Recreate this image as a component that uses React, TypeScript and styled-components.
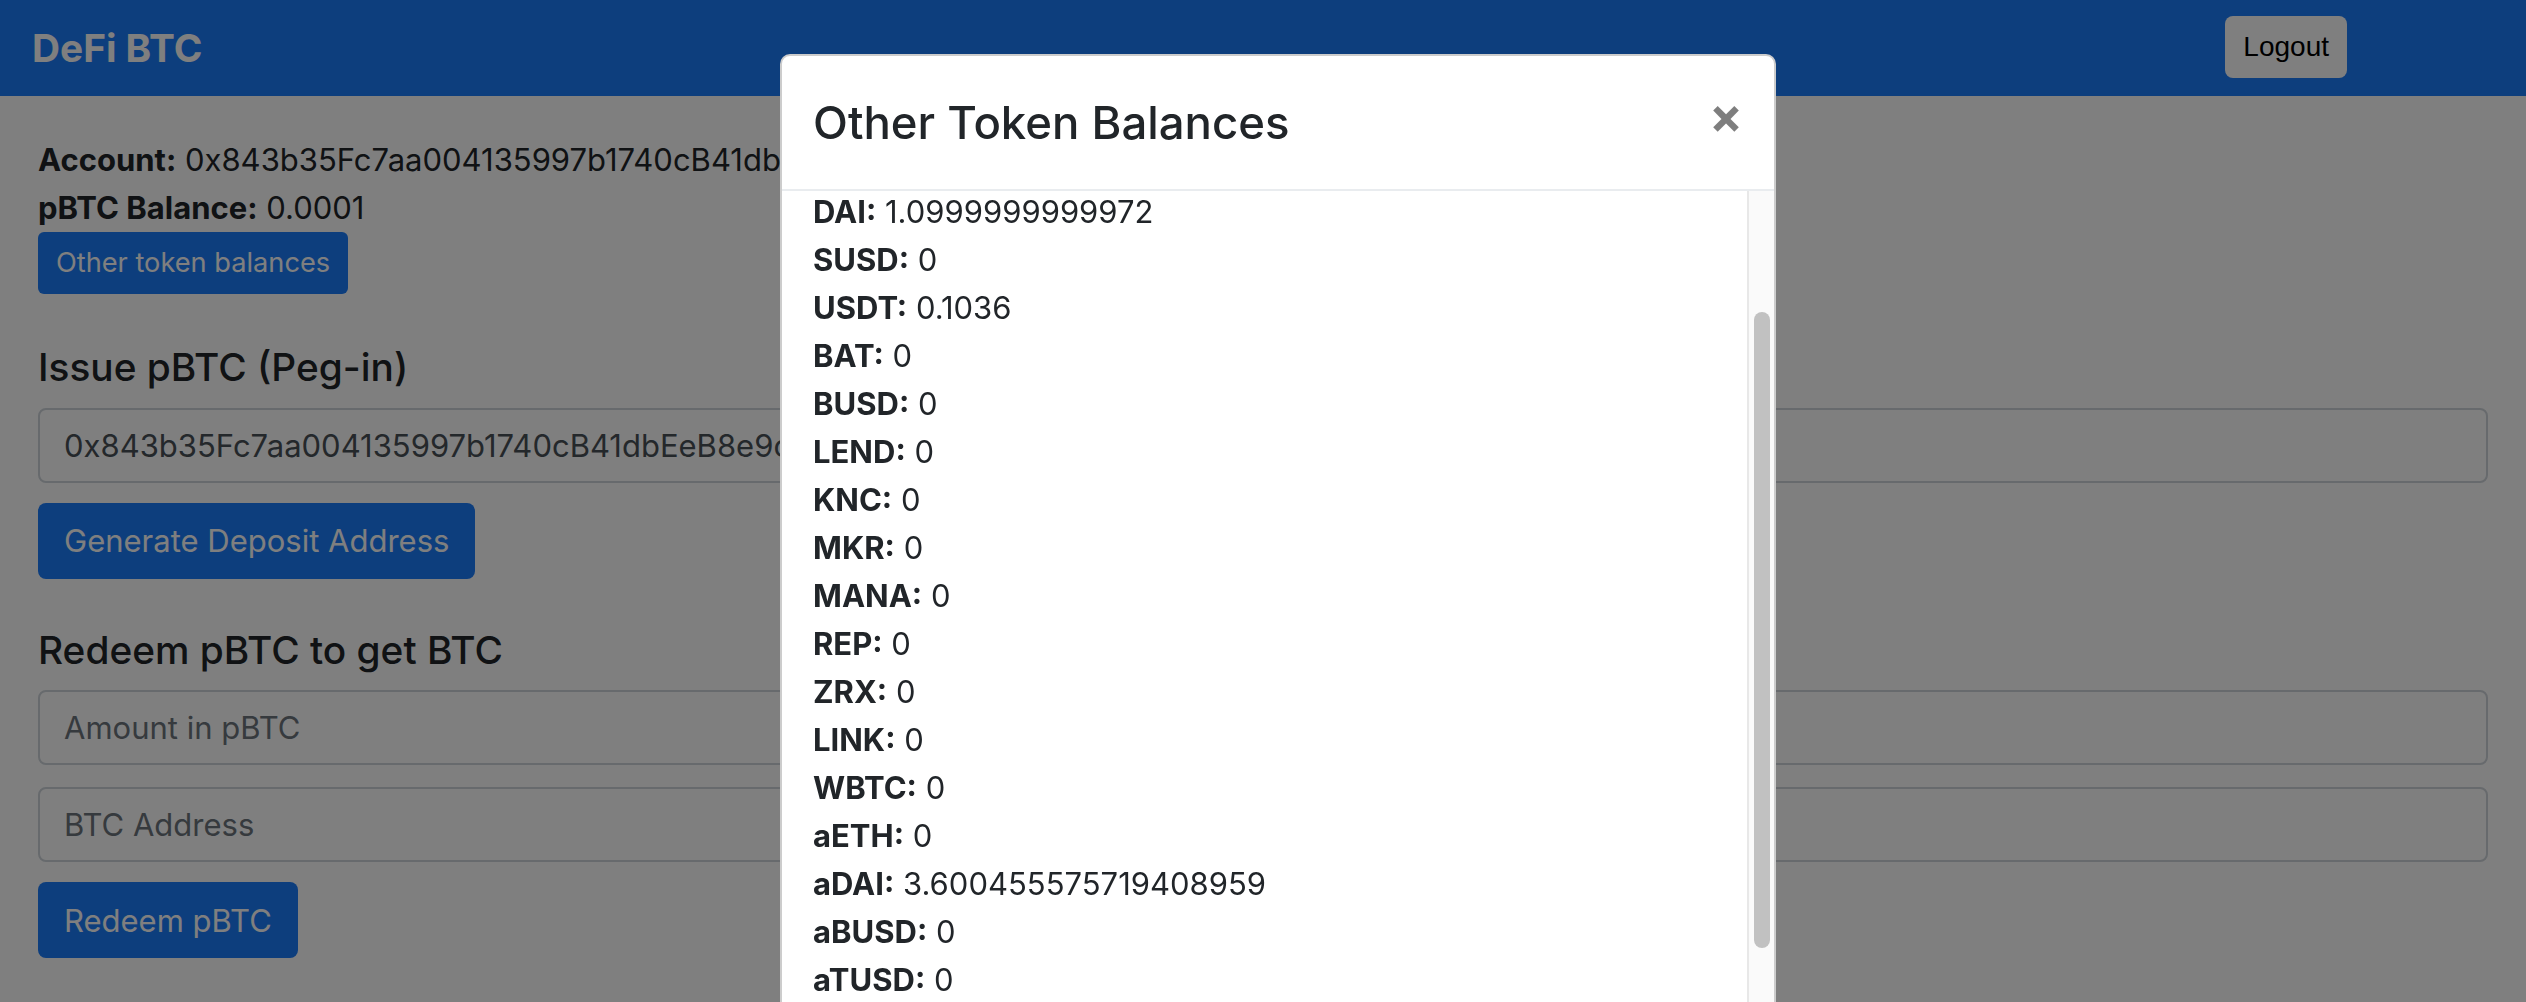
import React from "react";
import styled, { createGlobalStyle } from "styled-components";

const GlobalStyle = createGlobalStyle`
  html, body {
    margin: 0;
    height: 1002px;
    overflow: hidden;
    background: #ffffff;
  }
  body {
    font-family: Inter, "Noto Sans", sans-serif;
    font-size: 31px;
    line-height: 48px;
    color: #212529;
  }
  * { box-sizing: border-box; }
`;

const Page = styled.div`
  position: relative;
  min-height: 1002px;
`;

const Navbar = styled.nav`
  height: 96px;
  background: #1a7cfb;
  display: flex;
  align-items: center;
  padding: 0 179px 0 32px;
`;

const Brand = styled.a`
  font-size: 38.8px;
  font-weight: 700;
  color: #ffffff;
  line-height: 1;
  text-decoration: none;
`;

const LogoutButton = styled.button`
  margin-left: auto;
  margin-top: -2px;
  height: 62px;
  padding: 0 18px;
  border: none;
  border-radius: 8px;
  background: #ffffff;
  color: #000000;
  font-family: "Liberation Sans", Arial, sans-serif;
  font-size: 28px;
`;

const Main = styled.main`
  padding: 40px 38px 0;
  display: flex;
  flex-direction: column;
  align-items: flex-start;
`;

const InfoLine = styled.div`
  white-space: nowrap;
`;

const Label = styled.b`
  font-weight: 700;
`;

const Button = styled.button<{ $small?: boolean }>`
  height: ${(p) => (p.$small ? "62px" : "76px")};
  padding: 0 ${(p) => (p.$small ? "18px" : "26px")};
  margin-top: ${(p) => (p.$small ? "0" : "20px")};
  border: none;
  border-radius: ${(p) => (p.$small ? "6px" : "8px")};
  background: #1a7cfb;
  color: #ffffff;
  font-family: Inter, "Noto Sans", sans-serif;
  font-size: ${(p) => (p.$small ? "27.2px" : "31px")};
  line-height: 1;
`;

const SectionTitle = styled.h5<{ $top?: number }>`
  margin: ${(p) => p.$top ?? 50}px 0 17px;
  font-size: 38.8px;
  font-weight: 500;
  line-height: 1.2;
`;

const Input = styled.input<{ $gap?: boolean }>`
  width: 100%;
  height: 75px;
  margin-top: ${(p) => (p.$gap ? "22px" : "0")};
  padding: 0 24px;
  border: 2px solid #ced4da;
  border-radius: 8px;
  font-family: Inter, "Noto Sans", sans-serif;
  font-size: 31px;
  color: #495057;
  background: #ffffff;
  &::placeholder {
    color: #6c757d;
  }
`;

const Backdrop = styled.div`
  position: fixed;
  inset: 0;
  background: rgba(0, 0, 0, 0.5);
`;

const ModalLayer = styled.div`
  position: fixed;
  inset: 0;
  display: flex;
  justify-content: center;
  padding: 54px 0 0 30px;
`;

const ModalContent = styled.div`
  width: 996px;
  height: 1100px;
  background: #ffffff;
  border: 2px solid rgba(0, 0, 0, 0.2);
  border-radius: 10px;
  display: flex;
  flex-direction: column;
  overflow: hidden;
`;

const ModalHeader = styled.div`
  display: flex;
  align-items: flex-start;
  padding: 34px 31px 32px 31px;
  border-bottom: 2px solid #e9ecef;
`;

const ModalTitle = styled.h4`
  margin: 0;
  font-size: 45.5px;
  font-weight: 500;
  line-height: 1.47;
`;

const CloseButton = styled.button`
  margin-left: auto;
  padding: 0;
  border: none;
  background: transparent;
  color: #000000;
  opacity: 0.5;
  font-family: Inter, "Noto Sans", sans-serif;
  font-size: 50px;
  font-weight: 700;
  line-height: 1;
`;

const ModalBody = styled.div`
  flex: 1;
  display: flex;
  overflow: hidden;
`;

const TokenList = styled.div`
  flex: 1;
  margin-top: -3px;
  padding-left: 31px;
`;

const TokenRow = styled.div`
  white-space: nowrap;
  line-height: 48px;
`;

const ScrollTrack = styled.div`
  width: 27px;
  border-left: 2px solid #e8e8e8;
  background: #fafafa;
  padding: 121px 4px 0 5px;
`;

const ScrollThumb = styled.div`
  height: 636px;
  border-radius: 8px;
  background: #c1c1c1;
`;

const tokens: [string, string][] = [
  ["DAI", "1.0999999999972"],
  ["SUSD", "0"],
  ["USDT", "0.1036"],
  ["BAT", "0"],
  ["BUSD", "0"],
  ["LEND", "0"],
  ["KNC", "0"],
  ["MKR", "0"],
  ["MANA", "0"],
  ["REP", "0"],
  ["ZRX", "0"],
  ["LINK", "0"],
  ["WBTC", "0"],
  ["aETH", "0"],
  ["aDAI", "3.600455575719408959"],
  ["aBUSD", "0"],
  ["aTUSD", "0"],
];

const address = "0x843b35Fc7aa004135997b1740cB41dbEeB8e9c2d";

export default function App() {
  return (
    <Page>
      <GlobalStyle />
      <Navbar>
        <Brand href="#">DeFi BTC</Brand>
        <LogoutButton>Logout</LogoutButton>
      </Navbar>
      <Main>
        <InfoLine>
          <Label>Account:</Label> {address}
        </InfoLine>
        <InfoLine>
          <Label>pBTC Balance:</Label> 0.0001
        </InfoLine>
        <Button $small>Other token balances</Button>
        <SectionTitle>Issue pBTC (Peg-in)</SectionTitle>
        <Input defaultValue={address} readOnly />
        <Button>Generate Deposit Address</Button>
        <SectionTitle $top={48}>Redeem pBTC to get BTC</SectionTitle>
        <Input placeholder="Amount in pBTC" />
        <Input $gap placeholder="BTC Address" />
        <Button>Redeem pBTC</Button>
      </Main>
      <Backdrop />
      <ModalLayer>
        <ModalContent>
          <ModalHeader>
            <ModalTitle>Other Token Balances</ModalTitle>
            <CloseButton aria-label="Close">×</CloseButton>
          </ModalHeader>
          <ModalBody>
            <TokenList>
              {tokens.map(([name, value]) => (
                <TokenRow key={name}>
                  <Label>{name}:</Label> {value}
                </TokenRow>
              ))}
            </TokenList>
            <ScrollTrack>
              <ScrollThumb />
            </ScrollTrack>
          </ModalBody>
        </ModalContent>
      </ModalLayer>
    </Page>
  );
}
